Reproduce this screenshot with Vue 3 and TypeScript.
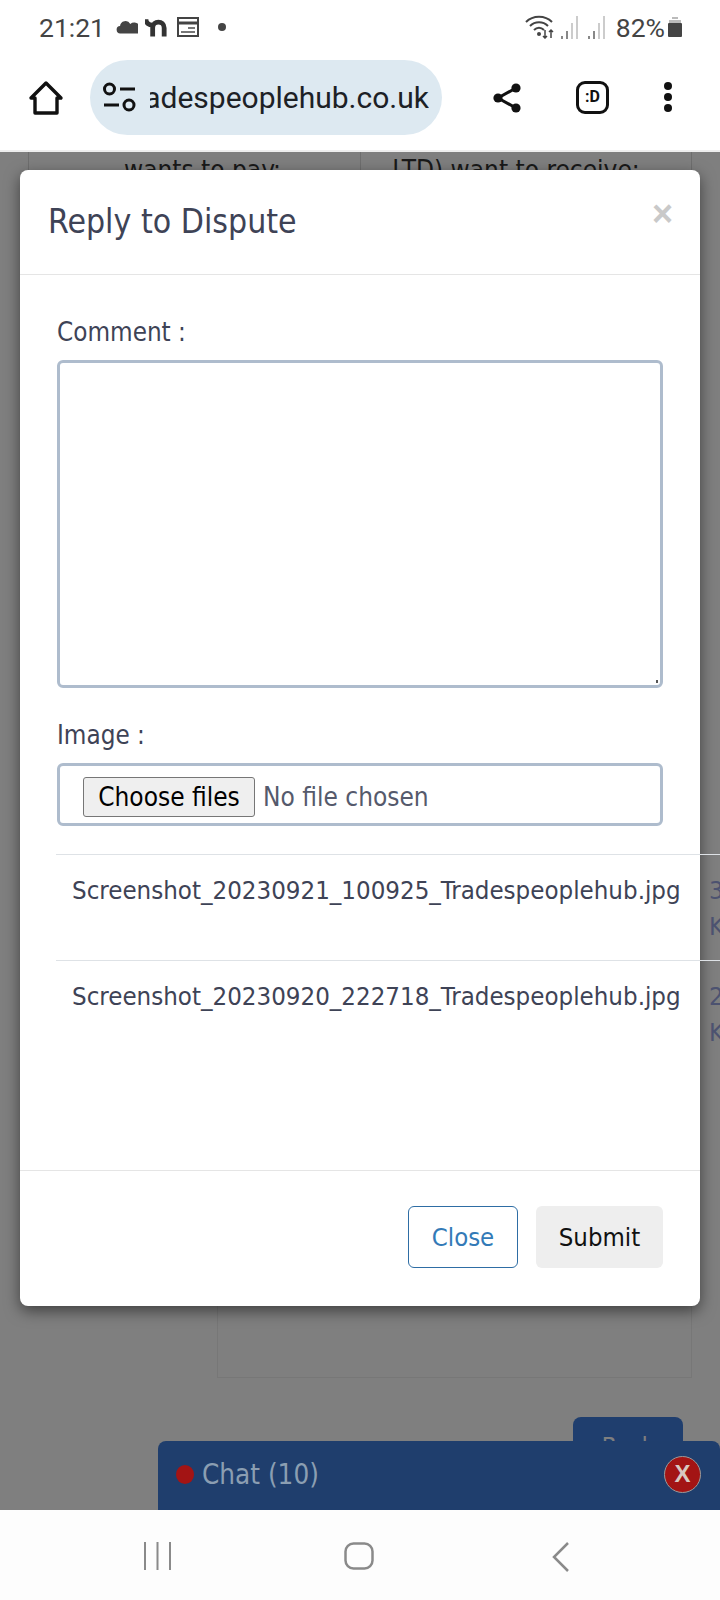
<script setup lang="ts">
const attachments = [
  { name: 'Screenshot_20230921_100925_Tradespeoplehub.jpg', size: '3', unit: 'KB' },
  { name: 'Screenshot_20230920_222718_Tradespeoplehub.jpg', size: '2', unit: 'KB' },
]
</script>

<template>
  <div class="phone">
    <div class="status-bar">
      <div class="status-left">
        <span class="clock">21:21</span>
        <svg class="ic-cloud" viewBox="0 0 24 14"><path d="M5 14a4 4 0 0 1-.6-8A6 6 0 0 1 15.6 3.6 5.400 5.400 0 0 1 24 14z" fill="#444" /></svg>
        <svg class="ic-n" viewBox="0 0 24 20"><path d="M1 2c0 4 3 6 7 6v12M8 11c0-4 3-6 6-6s6 2 6 6v9" fill="none" stroke="#333" stroke-width="5" /></svg>
        <svg class="ic-cal" viewBox="0 0 22 20"><rect x="1" y="1" width="20" height="18" fill="none" stroke="#444" stroke-width="2" /><path d="M1 6h20" stroke="#444" stroke-width="3" /><path d="M11 11h7M4 15h14" stroke="#777" stroke-width="2" /></svg>
        <span class="dot"></span>
      </div>
      <div class="status-right">
        <svg class="ic-wifi" viewBox="0 0 30 24"><path d="M1 7c7-7 19-7 26 0M5 11c5-5 13-5 18 0M9 15c3-3 7-3 10 0" fill="none" stroke="#444" stroke-width="2" /><circle cx="14" cy="19" r="2" fill="#444" /><path d="M20 15v8M18 21l2 2 2-2M26 23v-8M24 17l2-2 2 2" fill="none" stroke="#444" stroke-width="1.500" /></svg>
        <svg class="ic-signal" viewBox="0 0 20 24"><path d="M2 24v-3M7 24v-8" stroke="#888" stroke-width="2" /><path d="M12 24V8M17 24V1" stroke="#ccc" stroke-width="2" /></svg>
        <svg class="ic-signal" viewBox="0 0 20 24"><path d="M2 24v-3M7 24v-8" stroke="#888" stroke-width="2" /><path d="M12 24V8M17 24V1" stroke="#ccc" stroke-width="2" /></svg>
        <span class="battery-text">82%</span>
        <svg class="ic-batt" viewBox="0 0 14 20"><path d="M4 0h6v2H4z" fill="#bbb" /><path d="M1 3h12v3H1z" fill="#bbb" /><rect y="6" width="14" height="14" rx="1" fill="#444" /></svg>
      </div>
    </div>

    <div class="toolbar">
      <svg class="ic-home" viewBox="0 0 36 36"><path d="M3 18 18 3l15 15h-4v15H7V18z" fill="none" stroke="#111" stroke-width="3.400" stroke-linejoin="round" /></svg>
      <div class="url-pill">
        <svg class="ic-tune" viewBox="0 0 34 34"><circle cx="6.500" cy="8" r="5" fill="none" stroke="#111" stroke-width="3" /><path d="M17 8h15M1 24h15" stroke="#111" stroke-width="3" /><circle cx="26" cy="24" r="5" fill="none" stroke="#111" stroke-width="3" /></svg>
        <div class="url-clip"><span class="url-text">tradespeoplehub.co.uk</span></div>
      </div>
      <svg class="ic-share" viewBox="0 0 30 30"><path d="M24 5 6 15l18 10" fill="none" stroke="#111" stroke-width="3" /><circle cx="24" cy="5" r="4.600" fill="#111" /><circle cx="6" cy="15" r="4.600" fill="#111" /><circle cx="24" cy="25" r="4.600" fill="#111" /></svg>
      <div class="tab-badge">:D</div>
      <div class="menu-dots"><i></i><i></i><i></i></div>
    </div>

    <div class="content">
      <div class="behind-table">
        <div class="behind-cell">wants to pay:</div>
        <div class="behind-cell">LTD) want to receive:</div>
      </div>
      <div class="behind-box"></div>
      <div class="behind-back">Back</div>

      <div class="backdrop">
        <div class="modal">
          <div class="modal-header">
            <h4 class="modal-title">Reply to Dispute</h4>
            <span class="modal-close">×</span>
          </div>
          <div class="modal-body">
            <label class="field-label">Comment :</label>
            <div class="comment-wrap">
              <textarea class="comment"></textarea>
            </div>
            <label class="field-label image-label">Image :</label>
            <div class="file-input">
              <button class="file-btn" type="button">Choose files</button>
              <span class="file-state">No file chosen</span>
            </div>
            <div class="files">
              <div v-for="file in attachments" :key="file.name" class="file-row">
                <div class="file-name">{{ file.name }}</div>
                <div class="file-size">{{ file.size }}<br />{{ file.unit }}</div>
              </div>
            </div>
          </div>
          <div class="modal-footer">
            <button class="btn btn-close" type="button">Close</button>
            <button class="btn btn-submit" type="button">Submit</button>
          </div>
        </div>
      </div>

      <div class="chat-bar">
        <span class="chat-dot"></span>
        <span class="chat-label">Chat (10)</span>
        <span class="chat-x">X</span>
      </div>
    </div>

    <div class="nav-bar">
      <svg class="nav-recents" viewBox="0 0 27 28"><path d="M1 0v28M13.500 0v28M26 0v28" stroke="#8a8a8a" stroke-width="2" /></svg>
      <svg class="nav-home" viewBox="0 0 30 28"><rect x="1.500" y="1.500" width="27" height="25" rx="8" fill="none" stroke="#8a8a8a" stroke-width="2.500" /></svg>
      <svg class="nav-back" viewBox="0 0 18 30"><path d="M16 1 2 15l14 14" fill="none" stroke="#8a8a8a" stroke-width="2.500" /></svg>
    </div>
  </div>
</template>

<style>
html,
body {
  margin: 0;
  background: #fff;
}
</style>

<style scoped>
.phone {
  width: 720px;
  height: 1600px;
  display: flex;
  flex-direction: column;
  overflow: hidden;
  font-family: "DejaVu Sans Condensed", "DejaVu Sans", sans-serif;
  font-stretch: condensed;
}
.status-bar {
  height: 54px;
  flex: none;
  display: flex;
  align-items: center;
  justify-content: space-between;
  padding: 0 38px 0 39px;
  font-family: Roboto, sans-serif;
  font-stretch: normal;
  color: #444;
}
.status-left,
.status-right {
  display: flex;
  align-items: center;
}
.clock {
  font-size: 26.500px;
  margin-right: 11px;
}
.ic-cloud {
  width: 22px;
  height: 14px;
  margin-right: 7px;
}
.ic-n {
  width: 23px;
  height: 20px;
  margin-right: 9px;
}
.ic-cal {
  width: 22px;
  height: 20px;
  margin-right: 19px;
}
.dot {
  width: 8px;
  height: 8px;
  border-radius: 50%;
  background: #444;
}
.ic-wifi {
  width: 30px;
  height: 24px;
  margin-right: 5px;
}
.ic-signal {
  width: 20px;
  height: 24px;
  margin-right: 7px;
}
.battery-text {
  font-size: 26.500px;
  margin: 0 3px 0 2px;
}
.ic-batt {
  width: 14px;
  height: 20px;
}
.toolbar {
  height: 98px;
  flex: none;
  display: flex;
  align-items: flex-start;
  border-bottom: 2px solid #eee;
  box-sizing: border-box;
  padding-left: 28px;
}
.ic-home {
  width: 36px;
  height: 36px;
  margin-top: 26px;
}
.url-pill {
  width: 352px;
  height: 75px;
  margin: 6px 0 0 26px;
  border-radius: 38px;
  background: #dde9f1;
  display: flex;
  align-items: center;
  padding-left: 13px;
  box-sizing: border-box;
}
.ic-tune {
  width: 34px;
  height: 34px;
  flex: none;
}
.url-clip {
  width: 279px;
  margin-left: 13px;
  overflow: hidden;
  display: flex;
  justify-content: flex-end;
}
.url-text {
  font-family: Roboto, sans-serif;
  font-stretch: normal;
  font-size: 30px;
  color: #1c2126;
  white-space: nowrap;
}
.ic-share {
  width: 30px;
  height: 30px;
  margin: 29px 0 0 50px;
}
.tab-badge {
  width: 33px;
  height: 33px;
  margin: 27px 0 0 54px;
  box-sizing: border-box;
  border: 3.500px solid #111;
  border-radius: 9px;
  font-family: Roboto, sans-serif;
  font-stretch: normal;
  font-size: 16px;
  font-weight: 700;
  line-height: 26px;
  text-align: center;
  color: #111;
}
.menu-dots {
  display: flex;
  flex-direction: column;
  gap: 3px;
  margin: 28px 0 0 55px;
}
.menu-dots i {
  display: block;
  width: 8px;
  height: 8px;
  border-radius: 50%;
  background: #111;
}
.content {
  position: relative;
  height: 1358px;
  flex: none;
  overflow: hidden;
  background: #fff;
}
.behind-table {
  display: flex;
  width: 664px;
  margin-left: 28px;
  border: 1px solid #ddd;
  border-top: 0;
  box-sizing: border-box;
}
.behind-cell {
  width: 50%;
  height: 40px;
  box-sizing: border-box;
  padding: 3px 0 0 16px;
  font-size: 26px;
  line-height: 30px;
  text-align: center;
  color: #333;
  white-space: nowrap;
}
.behind-cell + .behind-cell {
  border-left: 1px solid #ddd;
  padding: 3px 20px 0 0;
}
.behind-box {
  width: 475px;
  height: 1185px;
  margin-left: 217px;
  box-sizing: border-box;
  border: 1px solid #eee;
}
.behind-back {
  width: 110px;
  height: 60px;
  margin: 39px 0 0 573px;
  border-radius: 8px;
  background: #3e7cdc;
  color: #fff;
  font-size: 24px;
  line-height: 60px;
  text-align: center;
}
.backdrop {
  position: absolute;
  inset: 0;
  background: rgba(0, 0, 0, 0.5);
}
.modal {
  width: 680px;
  height: 1136px;
  margin: 18px 0 0 20px;
  background: #fff;
  border-radius: 8px;
  box-shadow: 0 5px 15px rgba(0, 0, 0, 0.5);
  display: flex;
  flex-direction: column;
  color: #3e4356;
}
.modal-header {
  height: 105px;
  flex: none;
  box-sizing: border-box;
  border-bottom: 1px solid #e5e5e5;
  display: flex;
  justify-content: space-between;
  padding: 0 27px 0 28px;
}
.modal-title {
  margin: 29px 0 0;
  font-size: 33.500px;
  font-weight: 400;
  line-height: 46px;
}
.modal-close {
  margin-top: 19px;
  font-family: "Liberation Sans", sans-serif;
  font-stretch: normal;
  font-size: 36px;
  font-weight: 700;
  line-height: 50px;
  color: #c9c9c9;
}
.modal-body {
  flex: 1;
  padding: 40px 0 0 37px;
}
.field-label {
  display: block;
  font-size: 25.800px;
  line-height: 34px;
}
.comment-wrap {
  position: relative;
  width: 606px;
  margin-top: 11px;
}
.comment-wrap::after {
  content: "";
  position: absolute;
  right: 5px;
  bottom: 5px;
  width: 2px;
  height: 3px;
  background: #555;
}
.comment {
  display: block;
  width: 606px;
  height: 328px;
  box-sizing: border-box;
  border: 3px solid #aebccd;
  border-radius: 6px;
  outline: none;
  resize: none;
  background: #fff;
}
.image-label {
  margin-top: 30px;
}
.file-input {
  width: 606px;
  height: 63px;
  margin-top: 11px;
  box-sizing: border-box;
  border: 3px solid #aebccd;
  border-radius: 6px;
  display: flex;
  align-items: center;
  padding: 4px 0 0 23px;
  font-size: 26px;
  color: #555a6c;
}
.file-btn {
  width: 172px;
  height: 40px;
  padding: 0;
  margin-right: 8px;
  border: 1px solid #767676;
  border-radius: 3px;
  background: #efefef;
  font-family: "DejaVu Sans Condensed", "DejaVu Sans", sans-serif;
  font-stretch: condensed;
  font-size: 26px;
  color: #000;
}
.files {
  width: 664px;
  margin: 28px 0 0 -1px;
}
.file-row {
  height: 106px;
  box-sizing: border-box;
  border-top: 1px solid #dee2e6;
  display: flex;
  padding: 17px 0 0 16px;
  font-size: 25.630px;
  line-height: 36px;
  white-space: nowrap;
}
.file-name {
  width: 637px;
  flex: none;
}
.file-size {
  color: #4c5270;
}
.modal-footer {
  height: 136px;
  flex: none;
  box-sizing: border-box;
  border-top: 1px solid #e5e5e5;
  display: flex;
  justify-content: flex-end;
  gap: 18px;
  padding: 35px 37px 0 0;
}
.btn {
  height: 62px;
  padding: 0;
  border-radius: 6px;
  font-family: "DejaVu Sans Condensed", "DejaVu Sans", sans-serif;
  font-stretch: condensed;
  font-size: 25.500px;
}
.btn-close {
  width: 110px;
  background: #fff;
  border: 1px solid #2e6da4;
  color: #337ab7;
}
.btn-submit {
  width: 127px;
  background: #eee;
  border: 0;
  color: #111;
}
.chat-bar {
  position: absolute;
  left: 158px;
  right: 0;
  bottom: 0;
  height: 69px;
  border-radius: 8px 8px 0 0;
  background: #1f3e6d;
  display: flex;
  align-items: center;
  padding: 0 14px 2px 18px;
  box-sizing: border-box;
}
.chat-dot {
  width: 18px;
  height: 19px;
  border-radius: 50%;
  background: #a31414;
  margin-right: 8px;
}
.chat-label {
  flex: 1;
  font-size: 27.600px;
  color: #8b9eb2;
}
.chat-x {
  width: 37px;
  height: 37px;
  margin-right: 5px;
  border-radius: 50%;
  border: 1px solid #9a9a9a;
  box-sizing: border-box;
  background: #a31414;
  color: #d8c8c0;
  font-family: "Liberation Sans", sans-serif;
  font-stretch: normal;
  font-size: 24px;
  font-weight: 700;
  line-height: 34px;
  text-align: center;
}
.nav-bar {
  height: 90px;
  flex: none;
  background: #fdfdfd;
  display: flex;
  align-items: flex-start;
  padding-top: 32px;
  box-sizing: border-box;
}
.nav-recents {
  width: 27px;
  height: 28px;
  margin-left: 144px;
}
.nav-home {
  width: 30px;
  height: 28px;
  margin-left: 173px;
}
.nav-back {
  width: 18px;
  height: 30px;
  margin-left: 178px;
}
</style>
